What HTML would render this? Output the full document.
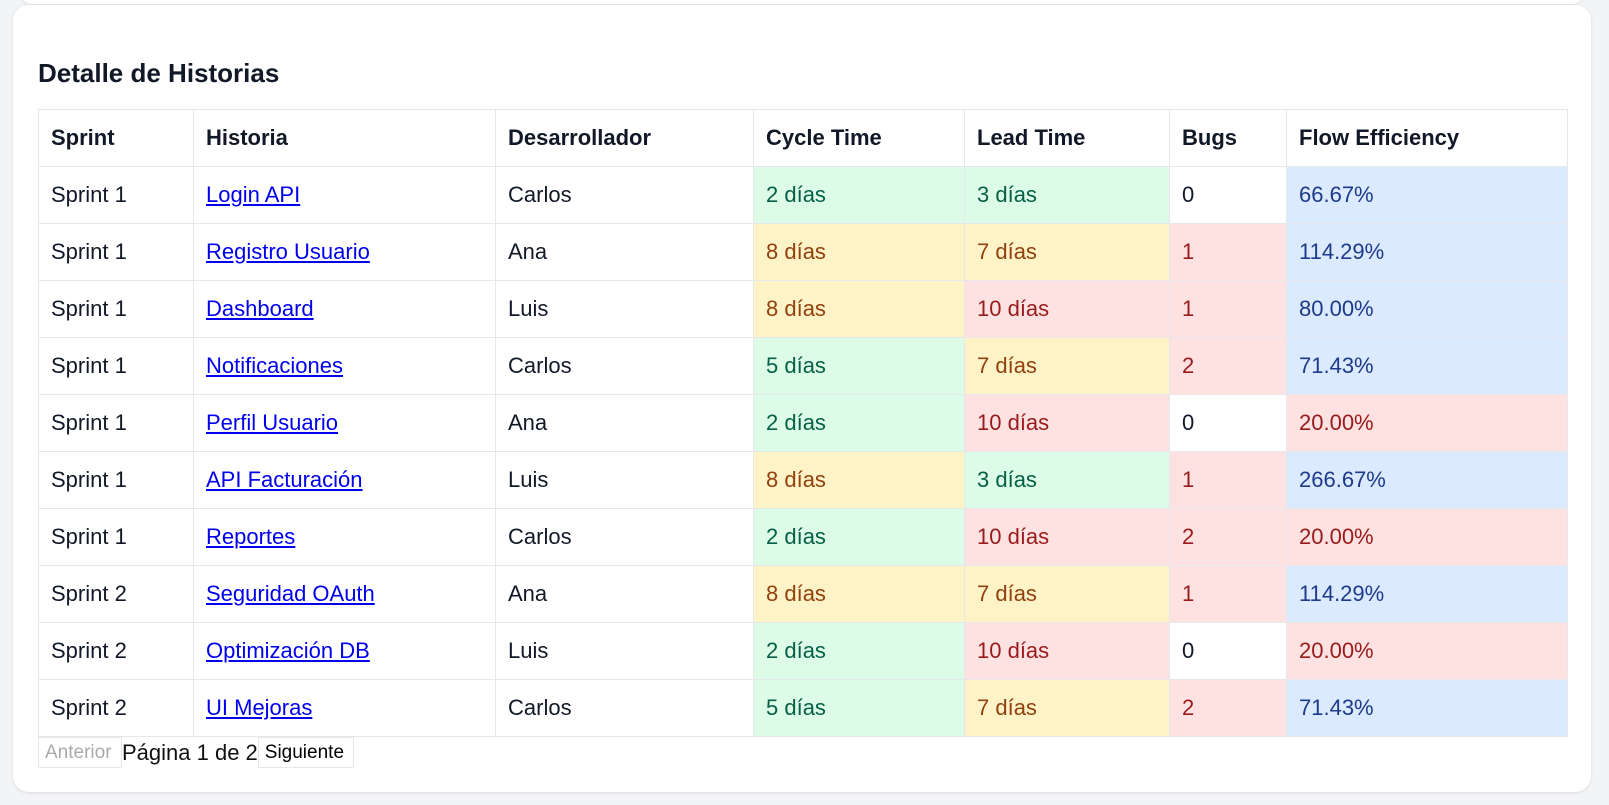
<!DOCTYPE html>
<html><head><meta charset="utf-8"><style>
html,body{margin:0;padding:0;background:#f3f4f6;width:1609px;height:805px;overflow:hidden;font-family:"Liberation Sans",sans-serif;}
.prev{position:absolute;left:20px;top:-20px;width:1564px;height:24px;background:#fff;border-radius:12px;box-shadow:0 1px 3px rgba(0,0,0,.1);}
.card{position:absolute;left:13px;top:5px;width:1578px;height:787px;background:#fff;border-radius:16px;box-shadow:0 1px 3px rgba(0,0,0,.1);}
h2{position:absolute;left:25px;top:56px;margin:0;font-size:26px;font-weight:bold;color:#111827;line-height:25px;}
table{position:absolute;left:25px;top:104px;border-collapse:collapse;width:1529px;table-layout:fixed;font-size:22px;}
td,th{border:1px solid #e5e7eb;padding:0 12px;height:56px;text-align:left;color:#111827;white-space:nowrap;}
th{font-weight:bold;height:56px;}
a{color:#0000ee;text-decoration:underline;}
.g{background:#dcfce7;color:#065f46}.y{background:#fef3c7;color:#92400e}.r{background:#fee2e2;color:#991b1b}.b{background:#dbeafe;color:#1e3a8a}
.pg{position:absolute;left:25px;top:732px;height:31px;display:flex;align-items:center;font-size:22px;color:#111;}
.btn{border:1px solid #e5e7eb;height:29px;line-height:29px;padding:0 6px;font-size:19px;}
</style></head><body>
<div class="prev"></div>
<div class="card">
<h2>Detalle de Historias</h2>
<table>
<colgroup><col style="width:155px"><col style="width:302px"><col style="width:258px"><col style="width:211px"><col style="width:205px"><col style="width:117px"><col style="width:281px"></colgroup>
<tr><th>Sprint</th><th>Historia</th><th>Desarrollador</th><th>Cycle Time</th><th>Lead Time</th><th>Bugs</th><th>Flow Efficiency</th></tr>
<tr><td>Sprint 1</td><td><a>Login API</a></td><td>Carlos</td><td class="g">2 días</td><td class="g">3 días</td><td>0</td><td class="b">66.67%</td></tr>
<tr><td>Sprint 1</td><td><a>Registro Usuario</a></td><td>Ana</td><td class="y">8 días</td><td class="y">7 días</td><td class="r">1</td><td class="b">114.29%</td></tr>
<tr><td>Sprint 1</td><td><a>Dashboard</a></td><td>Luis</td><td class="y">8 días</td><td class="r">10 días</td><td class="r">1</td><td class="b">80.00%</td></tr>
<tr><td>Sprint 1</td><td><a>Notificaciones</a></td><td>Carlos</td><td class="g">5 días</td><td class="y">7 días</td><td class="r">2</td><td class="b">71.43%</td></tr>
<tr><td>Sprint 1</td><td><a>Perfil Usuario</a></td><td>Ana</td><td class="g">2 días</td><td class="r">10 días</td><td>0</td><td class="r">20.00%</td></tr>
<tr><td>Sprint 1</td><td><a>API Facturación</a></td><td>Luis</td><td class="y">8 días</td><td class="g">3 días</td><td class="r">1</td><td class="b">266.67%</td></tr>
<tr><td>Sprint 1</td><td><a>Reportes</a></td><td>Carlos</td><td class="g">2 días</td><td class="r">10 días</td><td class="r">2</td><td class="r">20.00%</td></tr>
<tr><td>Sprint 2</td><td><a>Seguridad OAuth</a></td><td>Ana</td><td class="y">8 días</td><td class="y">7 días</td><td class="r">1</td><td class="b">114.29%</td></tr>
<tr><td>Sprint 2</td><td><a>Optimización DB</a></td><td>Luis</td><td class="g">2 días</td><td class="r">10 días</td><td>0</td><td class="r">20.00%</td></tr>
<tr><td>Sprint 2</td><td><a>UI Mejoras</a></td><td>Carlos</td><td class="g">5 días</td><td class="y">7 días</td><td class="r">2</td><td class="b">71.43%</td></tr>
</table>
<div class="pg"><span class="btn" style="color:#aaa;width:70px">Anterior</span><span>Página 1 de 2</span><span class="btn" style="color:#000;width:82px">Siguiente</span></div>
</div>
</body></html>
